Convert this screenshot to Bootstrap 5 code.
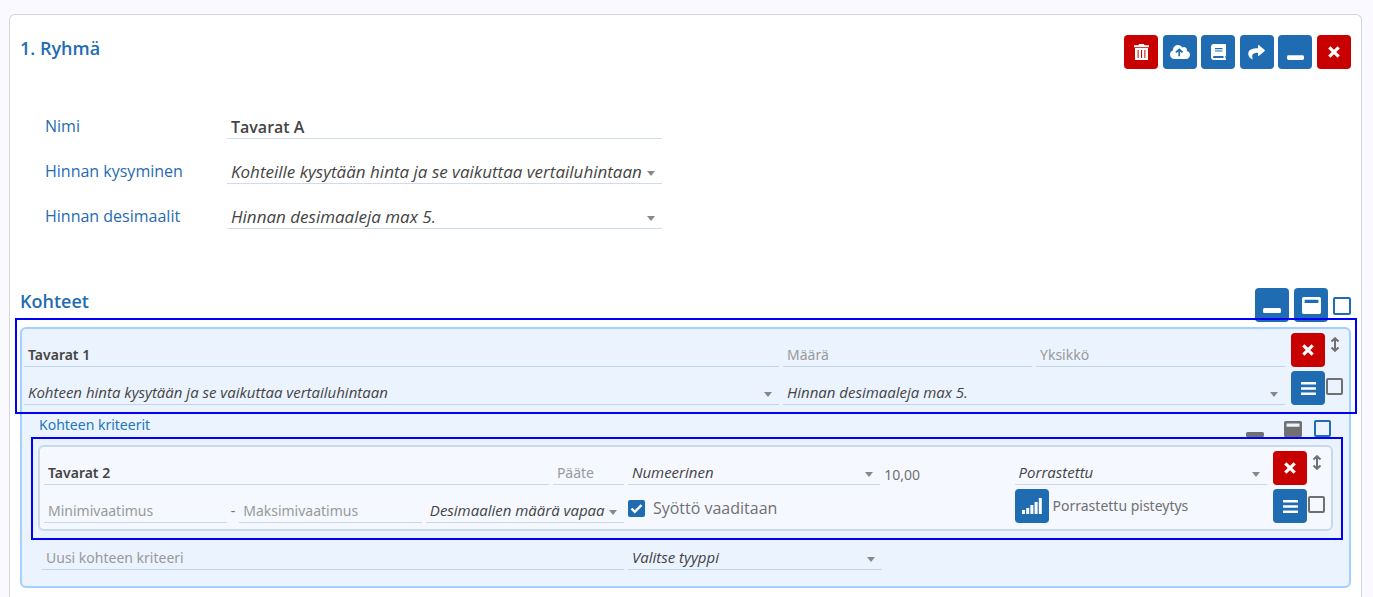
<!DOCTYPE html>
<html lang="fi">
<head>
<meta charset="utf-8">
<meta name="viewport" content="width=device-width, initial-scale=1">
<title>Ryhmä</title>
<link href="https://cdn.jsdelivr.net/npm/bootstrap@5.3.0/dist/css/bootstrap.min.css" rel="stylesheet">
<style>
  :root { --brand: #1f6cb3; --danger: #c80000; --line: #d0dcec; --ink: #444; --muted: #707070; }
  body { background: #f9f9ff; font-family: "Noto Sans", "Open Sans", sans-serif; font-size: 14px; line-height: 20px; color: var(--muted); }
  .group-card { margin: 14px 11px 0 9px; padding: 20px 10px 9px; background: #fff; border: 1px solid #cfd8dc; border-bottom: 0; border-radius: 6px 6px 0 0; }
  .title, .line-select, .group-fields, .required label { font-family: "Open Sans", "Noto Sans", sans-serif; }
  .title { font-size: 18px; line-height: 26px; font-weight: 600; color: var(--brand); margin: 0; }
  .toolbar { width: 227px; }
  .tool { width: 34px; height: 34px; padding: 0; border: 0; border-radius: 4px; background: var(--brand); color: #fff; display: flex; align-items: center; justify-content: center; flex: none; }
  .tool.is-danger { background: var(--danger); }
  .tool svg, .plain svg { display: block; }
  .plain { border: 0; padding: 0; background: none; color: var(--muted); }

  .line-input, .line-select { display: block; width: 100%; min-width: 0; height: 24px; padding: 0 4px; border: 0; border-bottom: 1px solid var(--line); border-radius: 0; background-color: transparent; color: var(--ink); font-size: 14px; line-height: 20px; }
  .line-input.is-name { font-weight: 600; }
  .line-input::placeholder { color: #999; opacity: 1; }
  .line-select { appearance: none; font-size: 15px; font-style: italic; padding: 0 14px 1px 4px;
    background: url("data:image/svg+xml,%3Csvg xmlns='http://www.w3.org/2000/svg' width='8' height='5'%3E%3Cpath d='M0 0h8L4 5z' fill='%23888'/%3E%3C/svg%3E") no-repeat right 7px bottom 7px; }

  .group-fields { margin-top: 25px; padding-left: 25px; }
  .group-fields .field-row { height: 45px; }
  .group-fields label { width: 182px; font-size: 16px; line-height: 26px; color: var(--brand); }
  .group-fields .line-input { font-family: inherit; font-size: 16px; line-height: 22px; }
  .group-fields .line-select { font-size: 17px; line-height: 22px; padding-bottom: 0; }

  .targets-head { margin-top: 59px; margin-bottom: 5px; }
  .targets-tools { gap: 5px; }
  .box-check { appearance: none; flex: none; width: 17px; height: 17px; margin: 0; border: 2px solid var(--muted); border-radius: 2px; background: transparent; }
  .targets-tools .box-check { width: 18px; height: 18px; margin-top: 2px; }
  .box-check.is-blue { border-color: var(--brand); }
  .box-check.is-filled:checked { border-color: var(--brand); background: var(--brand) url("data:image/svg+xml,%3Csvg xmlns='http://www.w3.org/2000/svg' viewBox='0 0 13 13'%3E%3Cpath d='M1.5 6.5l3.3 3.3 6.7-6.7' fill='none' stroke='%23fff' stroke-width='2.4'/%3E%3C/svg%3E") center / 13px no-repeat; }

  .target-panel { border: 2px solid #a3d0ff; border-radius: 6px; background: #ebf3ff; padding-bottom: 16px; --line: #c3d5ea; }
  .entry { gap: 6px; position: relative; }
  .target-entry { padding: 4px 6px 0 2px; }
  .criterion { margin: 8px 16px 0; border: 2px solid #cbd8ea; border-radius: 6px; background: #f5f8ff; padding: 4px 6px 6px 4px; --line: #cbd8ea; }
  .entry-grid { display: grid; gap: 4px; grid-auto-rows: 34px; align-items: end; }
  .target-grid { grid-template-columns: repeat(5, 1fr); }
  .span-3 { grid-column: span 3; }
  .span-2 { grid-column: span 2; }
  .criterion-grid { grid-template-columns: 4fr 71px 2fr 1fr 2fr; }
  .range { gap: 4px; }
  .decimals { width: 198px; flex: none; }
  .actions { display: grid; grid-template-columns: 34px 18px; grid-auto-rows: 34px; row-gap: 4px; justify-items: end; align-items: center; }
  .actions .box-check { margin-bottom: 4px; }
  .drag { align-self: start; padding: 4px 3px; cursor: grab; }

  .highlight { position: absolute; z-index: 2; border: 2px solid #00f; pointer-events: none; }
  .target-entry > .highlight { inset: -11px -8px -9px -7px; }
  .criterion > .highlight { inset: -10px -12px -11px -9px; }

  .criteria-head { margin: 10px 18px 0 17px; height: 22px; color: #2576ba; }
  .criteria-tools { gap: 20px; }
  .new-criterion { display: grid; gap: 4px; grid-template-columns: 582fr 254fr 447fr; margin: 15px 16px 0 20px; }
  .required label { font-size: 16px; line-height: 22px; }
</style>
</head>
<body>
<svg width="0" height="0" class="d-none" aria-hidden="true">
  <symbol id="i-x" viewBox="0 0 12 12"><path d="M1.3 1.3l9.4 9.4M10.7 1.3l-9.4 9.4" stroke="currentColor" stroke-width="3.2" fill="none"/></symbol>
  <symbol id="i-min" viewBox="0 0 18 16"><rect x="0" y="11" width="18" height="5" rx="1.5" fill="currentColor"/></symbol>
  <symbol id="i-win" viewBox="0 0 18 16"><path fill="currentColor" fill-rule="evenodd" d="M1.500 0h15a1.500 1.500 0 0 1 1.500 1.500v13a1.500 1.500 0 0 1-1.500 1.500h-15A1.500 1.500 0 0 1 0 14.500v-13A1.500 1.500 0 0 1 1.500 0zM2.500 2.500v3.200h13V2.500z"/></symbol>
  <symbol id="i-menu" viewBox="0 0 15 13"><path fill="currentColor" d="M0 0h15v2.600H0zM0 5.200h15v2.600H0zM0 10.400h15V13H0z"/></symbol>
  <symbol id="i-updown" viewBox="0 0 10 15"><path d="M5 2v11M1.500 4.500L5 1.200l3.500 3.300M1.500 10.500L5 13.800l3.500-3.300" fill="none" stroke="currentColor" stroke-width="2"/></symbol>
</svg>

<main class="group-card">
  <header class="d-flex justify-content-between align-items-start">
    <h1 class="title">1. Ryhmä</h1>
    <div class="toolbar d-flex justify-content-between">
      <button type="button" class="tool is-danger" aria-label="Poista"><svg width="15" height="16" viewBox="0 0 15 16"><path fill="currentColor" fill-rule="evenodd" d="M0 1.200h4.300L5.200 0h4.600l.9 1.200H15v2H0zM1 4h13v12H1zm2.600 2v8h1V6zm3.400 0v8h1V6zm3.400 0v8h1V6z"/></svg></button>
      <button type="button" class="tool" aria-label="Lähetä"><svg width="20" height="14" viewBox="0 0 640 448"><path fill="currentColor" fill-rule="evenodd" d="M537.600 194.600c4-10.700 6.400-22.400 6.400-34.600 0-53-43-96-96-96-19.700 0-38.100 6-53.300 16.200C367 32.200 315.300 0 256 0 167.600 0 96 71.600 96 160c0 2.700.1 5.400.2 8.100C40.200 187.800 0 241.200 0 304c0 79.500 64.500 144 144 144h368c70.700 0 128-57.300 128-128 0-61.900-44-113.600-102.400-125.400zM295 100l125 118-38 40-60-54v156h-54V204l-60 54-38-40z"/></svg></button>
      <button type="button" class="tool" aria-label="Kirjasto"><svg width="15" height="16" viewBox="0 0 15 16"><path fill="currentColor" fill-rule="evenodd" d="M3 0h11.200a.8.800 0 0 1 .8.800v10.700l-.6.800v1.700l.6.800V16H3a3 3 0 0 1-3-3V3a3 3 0 0 1 3-3zm1 4v1.200h7.500V4zm0 2.400v1.200h7.500V6.400zM3 12a1 1 0 0 0 0 2h9.500v-2z"/></svg></button>
      <button type="button" class="tool" aria-label="Siirrä"><svg width="17" height="15" viewBox="0 0 17 15"><path fill="currentColor" d="M10 .7c0-.7.700-.9 1.100-.5l5.600 4.700c.3.300.3.800 0 1.100l-5.600 4.800c-.5.400-1.100.1-1.100-.5V7.800C5.500 7.800 3.300 9 4.600 13.500c.1.600-.5 1-1 .600C1.500 12.600.3 10.800.3 8.900.3 4.500 4 3.400 10 3.300z"/></svg></button>
      <button type="button" class="tool" aria-label="Pienennä"><svg width="17" height="15"><use href="#i-min"/></svg></button>
      <button type="button" class="tool is-danger" aria-label="Sulje"><svg width="12" height="12"><use href="#i-x"/></svg></button>
    </div>
  </header>

  <section class="group-fields">
    <div class="field-row d-flex align-items-end">
      <label for="name">Nimi</label>
      <div class="col-4"><input id="name" class="line-input is-name" type="text" value="Tavarat A"></div>
    </div>
    <div class="field-row d-flex align-items-end">
      <label for="price">Hinnan kysyminen</label>
      <div class="col-4"><select id="price" class="line-select"><option>Kohteille kysytään hinta ja se vaikuttaa vertailuhintaan</option></select></div>
    </div>
    <div class="field-row d-flex align-items-end">
      <label for="dec">Hinnan desimaalit</label>
      <div class="col-4"><select id="dec" class="line-select"><option>Hinnan desimaaleja max 5.</option></select></div>
    </div>
  </section>

  <header class="targets-head d-flex justify-content-between align-items-start">
    <h2 class="title">Kohteet</h2>
    <div class="targets-tools d-flex align-items-center">
      <button type="button" class="tool" aria-label="Pienennä kaikki"><svg width="18" height="16"><use href="#i-min"/></svg></button>
      <button type="button" class="tool" aria-label="Suurenna kaikki"><svg width="19" height="17"><use href="#i-win"/></svg></button>
      <input type="checkbox" class="box-check is-blue" aria-label="Valitse kaikki kohteet">
    </div>
  </header>

  <section class="target-panel">
    <div class="entry target-entry d-flex">
      <div class="entry-grid target-grid flex-grow-1">
        <input class="line-input is-name span-3" type="text" value="Tavarat 1" aria-label="Kohteen nimi">
        <input class="line-input" type="text" placeholder="Määrä" aria-label="Määrä">
        <input class="line-input" type="text" placeholder="Yksikkö" aria-label="Yksikkö">
        <select class="line-select span-3" aria-label="Hinnan kysyminen"><option>Kohteen hinta kysytään ja se vaikuttaa vertailuhintaan</option></select>
        <select class="line-select span-2" aria-label="Hinnan desimaalit"><option>Hinnan desimaaleja max 5.</option></select>
      </div>
      <div class="actions">
        <button type="button" class="tool is-danger" aria-label="Poista kohde"><svg width="12" height="12"><use href="#i-x"/></svg></button>
        <button type="button" class="plain drag" aria-label="Siirrä kohdetta"><svg width="10" height="15"><use href="#i-updown"/></svg></button>
        <button type="button" class="tool" aria-label="Valikko"><svg width="15" height="13"><use href="#i-menu"/></svg></button>
        <input type="checkbox" class="box-check" aria-label="Valitse kohde">
      </div>
      <div class="highlight"></div>
    </div>

    <div class="criteria-head d-flex justify-content-between">
      <span>Kohteen kriteerit</span>
      <div class="criteria-tools d-flex align-items-end">
        <button type="button" class="plain" aria-label="Pienennä kriteerit"><svg width="18" height="16"><use href="#i-min"/></svg></button>
        <div class="d-flex align-items-end gap-2">
          <button type="button" class="plain me-1" aria-label="Suurenna kriteerit"><svg width="18" height="16"><use href="#i-win"/></svg></button>
          <input type="checkbox" class="box-check is-blue" aria-label="Valitse kaikki kriteerit">
        </div>
      </div>
    </div>

    <div class="entry criterion d-flex">
      <div class="entry-grid criterion-grid flex-grow-1">
        <input class="line-input is-name" type="text" value="Tavarat 2" aria-label="Kriteerin nimi">
        <input class="line-input" type="text" placeholder="Pääte" aria-label="Pääte">
        <select class="line-select" aria-label="Tyyppi"><option>Numeerinen</option></select>
        <span>10,00</span>
        <select class="line-select" aria-label="Pisteytys"><option>Porrastettu</option></select>
        <div class="range span-2 d-flex align-items-center">
          <input class="line-input" type="text" placeholder="Minimivaatimus" aria-label="Minimivaatimus">
          <span>-</span>
          <input class="line-input" type="text" placeholder="Maksimivaatimus" aria-label="Maksimivaatimus">
          <select class="line-select decimals" aria-label="Desimaalit"><option>Desimaalien määrä vapaa</option></select>
        </div>
        <div class="required span-2 d-flex align-items-center gap-2 align-self-center mt-1">
          <input id="req" type="checkbox" class="box-check is-filled" checked>
          <label for="req">Syöttö vaaditaan</label>
        </div>
        <div class="d-flex align-items-center gap-1">
          <button type="button" class="tool" aria-label="Avaa pisteytys"><svg width="20" height="16" viewBox="0 0 20 16"><path fill="currentColor" d="M0 12h3v4H0zM4.200 10h3v6h-3zM8.400 7h3v9h-3zM12.600 4h3v12h-3zM16.800 0h3v16h-3z"/></svg></button>
          <span>Porrastettu pisteytys</span>
        </div>
      </div>
      <div class="actions">
        <button type="button" class="tool is-danger" aria-label="Poista kriteeri"><svg width="12" height="12"><use href="#i-x"/></svg></button>
        <button type="button" class="plain drag" aria-label="Siirrä kriteeriä"><svg width="10" height="15"><use href="#i-updown"/></svg></button>
        <button type="button" class="tool" aria-label="Valikko"><svg width="15" height="13"><use href="#i-menu"/></svg></button>
        <input type="checkbox" class="box-check" aria-label="Valitse kriteeri">
      </div>
      <div class="highlight"></div>
    </div>

    <div class="new-criterion">
      <input class="line-input" type="text" placeholder="Uusi kohteen kriteeri" aria-label="Uusi kohteen kriteeri">
      <select class="line-select" aria-label="Uuden kriteerin tyyppi"><option>Valitse tyyppi</option></select>
    </div>
  </section>
</main>
<script src="https://cdn.jsdelivr.net/npm/bootstrap@5.3.0/dist/js/bootstrap.bundle.min.js"></script>
</body>
</html>
